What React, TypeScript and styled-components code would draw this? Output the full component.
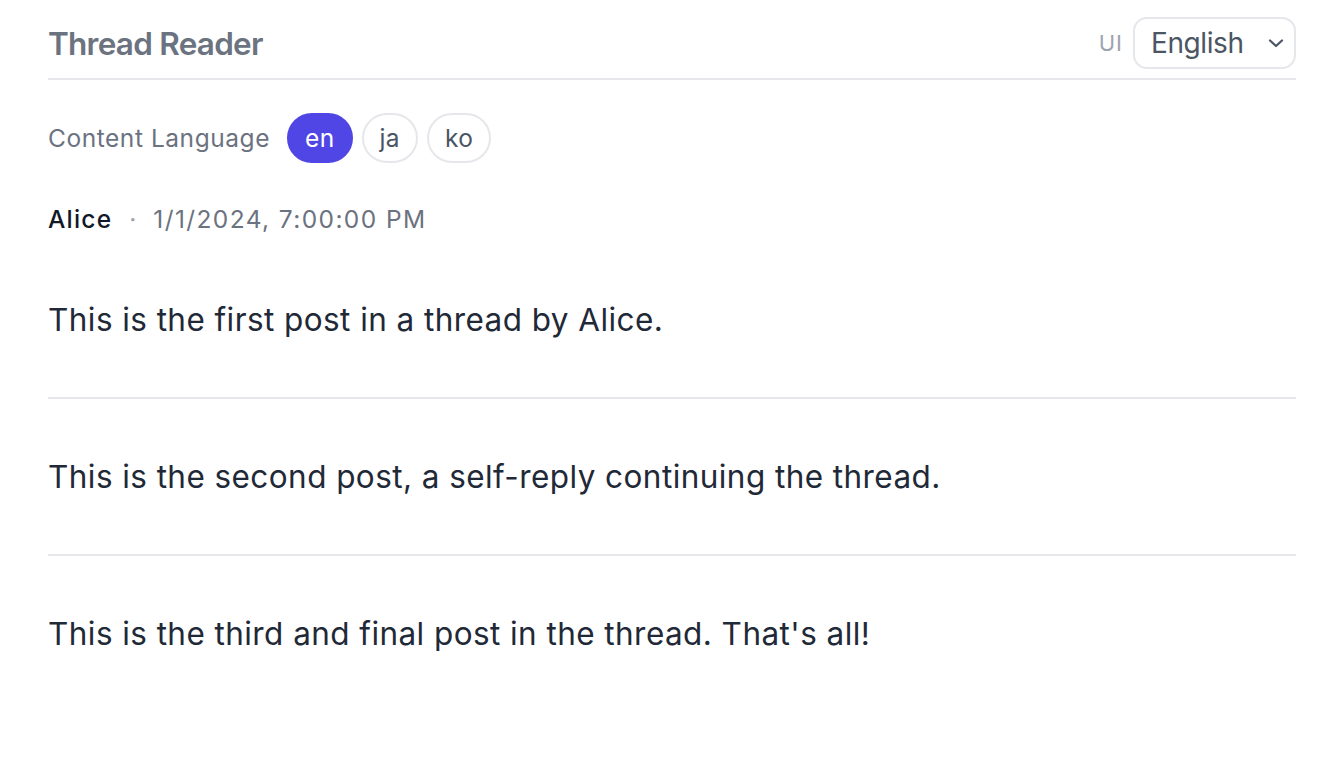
import React from "react";
import styled, { createGlobalStyle } from "styled-components";

const Global = createGlobalStyle`
  html, body { margin: 0; padding: 0; background: #ffffff; }
  body { font-family: Inter, "Noto Sans", "Liberation Sans", sans-serif; -webkit-font-smoothing: antialiased; }
  * { box-sizing: border-box; }
`;

const Page = styled.div`
  padding: 0 48px;
`;

const Header = styled.header`
  display: flex;
  justify-content: space-between;
  align-items: center;
  padding: 17px 0 9px;
  border-bottom: 2px solid #e5e7eb;
`;

const Title = styled.h1`
  margin: 0;
  font-size: 31.5px;
  font-weight: 600;
  color: #6b7280;
  letter-spacing: -0.75px;
`;

const UiPicker = styled.div`
  display: flex;
  align-items: center;
  gap: 10px;
`;

const UiLabel = styled.span`
  font-size: 22px;
  letter-spacing: 1px;
  color: #9ca3af;
`;

const SelectBox = styled.div`
  position: relative;
  width: 163px;
  height: 52px;
  border: 2px solid #e5e7eb;
  border-radius: 14px;
  display: flex;
  align-items: center;
  padding: 0 16px;
  font-size: 28px;
  letter-spacing: -0.4px;
  color: #4b5563;
`;

const Chevron = styled.svg`
  position: absolute;
  right: 9px;
  top: 50%;
  transform: translateY(-50%);
`;

const LangRow = styled.div`
  display: flex;
  align-items: center;
  gap: 9px;
  margin-top: 33px;
`;

const LangLabel = styled.span`
  font-size: 24.5px;
  letter-spacing: 0.55px;
  color: #6b7280;
  margin-right: 8px;
`;

const Pill = styled.button<{ $active?: boolean }>`
  height: 50px;
  padding: 0 16px;
  border-radius: 999px;
  border: 2px solid ${(p) => (p.$active ? "#4f46e5" : "#e5e7eb")};
  background: ${(p) => (p.$active ? "#4f46e5" : "#ffffff")};
  color: ${(p) => (p.$active ? "#ffffff" : "#4b5563")};
  font-family: inherit;
  font-size: 24.5px;
  letter-spacing: 0.4px;
  cursor: pointer;
`;

const Meta = styled.div`
  display: flex;
  align-items: center;
  gap: 17px;
  margin-top: 38px;
  margin-bottom: 4px;
  font-size: 24.5px;
  line-height: 1.5;
`;

const Author = styled.span`
  font-weight: 500;
  letter-spacing: 1.2px;
  color: #111827;
`;

const Dot = styled.span`
  color: #9ca3af;
`;

const Time = styled.span`
  letter-spacing: 1.4px;
  color: #6b7280;
`;

const Post = styled.article`
  padding: 54px 0;
  font-size: 31.5px;
  line-height: 1.5;
  letter-spacing: 0.43px;
  color: #1f2937;
  & + & {
    border-top: 2px solid #e5e7eb;
  }
`;

const posts = [
  "This is the first post in a thread by Alice.",
  "This is the second post, a self-reply continuing the thread.",
  "This is the third and final post in the thread. That's all!",
];

export default function App() {
  return (
    <>
      <Global />
      <Page>
        <Header>
          <Title>Thread Reader</Title>
          <UiPicker>
            <UiLabel>UI</UiLabel>
            <SelectBox>
              English
              <Chevron width="18" height="10" viewBox="0 0 18 10" fill="none">
                <path d="M3 2.5l6 5.5 6-5.5" stroke="#4b5563" strokeWidth="2.2" strokeLinecap="round" strokeLinejoin="round" />
              </Chevron>
            </SelectBox>
          </UiPicker>
        </Header>
        <LangRow>
          <LangLabel>Content Language</LangLabel>
          <Pill $active>en</Pill>
          <Pill>ja</Pill>
          <Pill>ko</Pill>
        </LangRow>
        <Meta>
          <Author>Alice</Author>
          <Dot>·</Dot>
          <Time>1/1/2024, 7:00:00 PM</Time>
        </Meta>
        {posts.map((t) => (
          <Post key={t}>{t}</Post>
        ))}
      </Page>
    </>
  );
}
